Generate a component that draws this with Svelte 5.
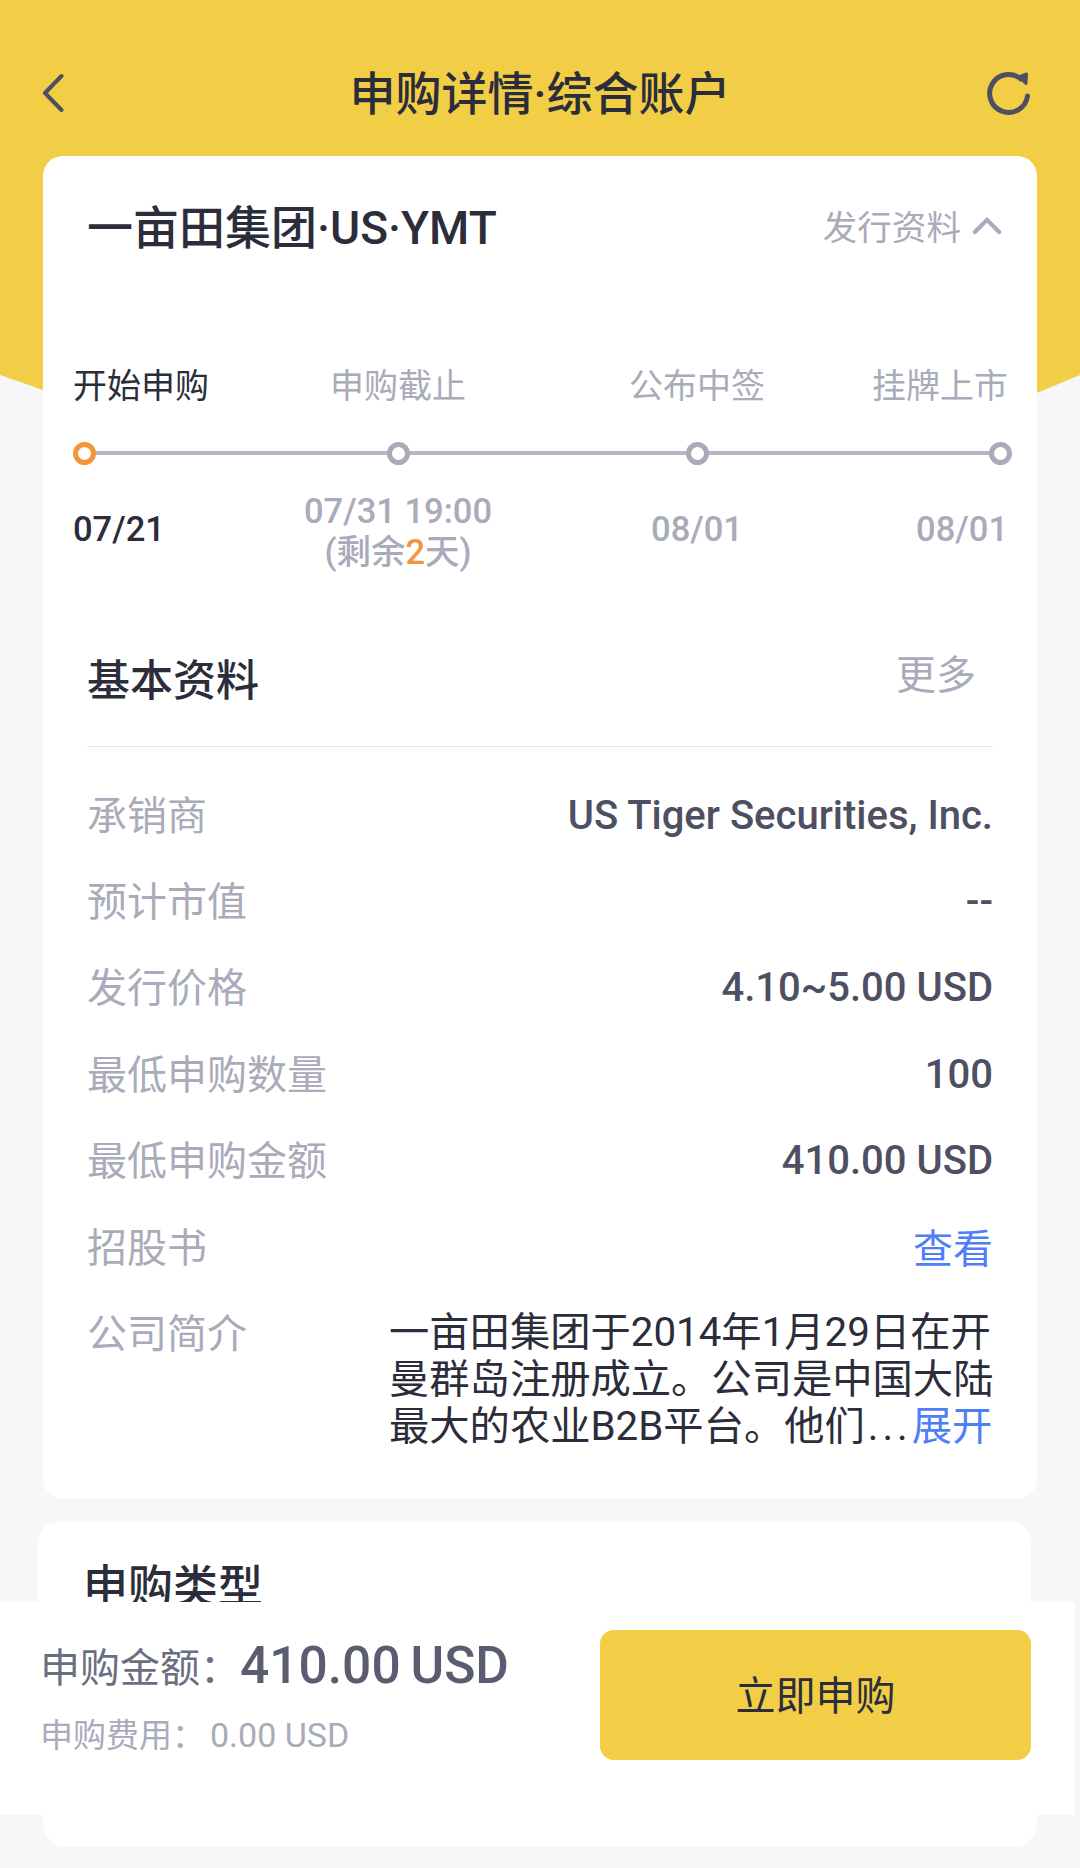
<script>
  const rows = [
    { k: '承销商', v: 'US Tiger Securities, Inc.' },
    { k: '预计市值', v: '--' },
    { k: '发行价格', v: '4.10~5.00 USD' },
    { k: '最低申购数量', v: '100' },
    { k: '最低申购金额', v: '410.00 USD' }
  ];
  const steps = [
    { label: '开始申购', x: 'first active', date: '07/21' },
    { label: '申购截止', x: 'second', date: '07/31 19:00' },
    { label: '公布中签', x: 'third', date: '08/01' },
    { label: '挂牌上市', x: 'fourth', date: '08/01' }
  ];
</script>

<div class="page">
  <div class="yellow"></div>

  <header class="nav">
    <svg class="back" viewBox="0 0 24 40" width="24" height="40"><path d="M21.500 3 L5 20 L21.500 37" fill="none" stroke="#4d5062" stroke-width="4" stroke-linecap="round" stroke-linejoin="round"/></svg>
    <h1>申购详情·综合账户</h1>
    <svg class="refresh" viewBox="0 0 48 48" width="48" height="48"><path d="M42.500 26A19 19 0 1 1 36 9" fill="none" stroke="#4d5062" stroke-width="5" stroke-linecap="round"/><path d="M41.500 4L41 13.500L34 7z" fill="#4d5062" stroke="#4d5062" stroke-width="3" stroke-linejoin="round"/></svg>
  </header>

  <section class="card main">
    <div class="head">
      <h2>一亩田集团·US·YMT</h2>
      <div class="issue">发行资料<svg viewBox="0 0 32 20" width="30" height="19"><path d="M3 17 L16 4 L29 17" fill="none" stroke="#a9abba" stroke-width="4.500" stroke-linecap="round"/></svg></div>
    </div>

    <div class="timeline">
      {#each steps as s}
        <div class="step {s.x}">
          <div class="label">{s.label}</div>
          <div class="dotrow"><span class="dot"></span></div>
          <div class="date">
            {#if s.label === '申购截止'}
              <div>{s.date}</div>
              <div>(剩余<b>2</b>天)</div>
            {:else}
              {s.date}
            {/if}
          </div>
        </div>
      {/each}
      <div class="line"></div>
    </div>

    <div class="basic">
      <h3>基本资料</h3>
      <span>更多</span>
    </div>
    <div class="rows">
      {#each rows as r}
        <div class="row"><span class="k">{r.k}</span><span class="v">{r.v}</span></div>
      {/each}
      <div class="row"><span class="k">招股书</span><span class="link">查看</span></div>
      <div class="row intro">
        <span class="k">公司简介</span>
        <p>一亩田集团于2014年1月29日在开<br>曼群岛注册成立。公司是中国大陆<br>最大的农业B2B平台。他们<span class="dots">...</span><span class="link">展开</span></p>
      </div>
    </div>
  </section>

  <section class="card second">
    <h3>申购类型</h3>
  </section>
  <section class="card third"></section>

  <footer class="bar">
    <div class="sum">
      <div class="amount"><span class="al">申购金额：</span><strong>410.00 USD</strong></div>
      <div class="fee"><span>申购费用：</span><span class="feev">0.00 USD</span></div>
    </div>
    <button>立即申购</button>
  </footer>
</div>

<style>
  :global(body) { margin: 0; background: #f6f7f9; }
  .page {
    position: relative;
    width: 1080px;
    height: 1868px;
    overflow: hidden;
    background: #f6f7f9;
    font-family: "Noto Sans CJK SC", Roboto, sans-serif;
    color: #2b2d3b;
    padding-top: 56px;
    box-sizing: border-box;
  }
  .yellow {
    position: absolute;
    left: 0; top: 0;
    width: 1080px;
    height: 420px;
    background: #f1ce45;
    clip-path: polygon(0 0, 100% 0, 100% 375px, 96% 393px, 4% 390px, 0 375px);
  }
  .nav {
    position: relative;
    height: 72px;
    display: flex;
    align-items: center;
    justify-content: space-between;
    padding: 0 47px 0 40px;
  }
  .back { margin-top: 2px; }
  .refresh { margin-top: 4px; }
  .nav h1 {
    position: absolute;
    left: 0; right: 0;
    margin: 0;
    padding-top: 4px;
    text-align: center;
    font-size: 46px;
    line-height: 72px;
    font-weight: 500;
    font-family: Roboto, "Noto Sans CJK SC", sans-serif;
  }
  .card {
    position: relative;
    background: #fff;
    border-radius: 20px;
    box-sizing: border-box;
  }
  .main {
    margin: 28px 43px 0;
    height: 1343px;
    padding: 0 44px;
  }
  .head {
    display: flex;
    justify-content: space-between;
    align-items: center;
    height: 136px;
    padding-bottom: 8px;
    margin-right: -9px;
  }
  .head h2 {
    margin: 0;
    font-size: 46px;
    font-weight: 500;
    font-family: Roboto, "Noto Sans CJK SC", sans-serif;
  }
  .issue {
    display: flex;
    align-items: center;
    gap: 11px;
    margin-top: 2px;
    font-size: 34.6px;
    color: #a9abba;
  }
  .timeline {
    position: relative;
    margin: 66px -15px 0 -14px;
    height: 240px;
    display: flex;
    font-size: 34px;
    color: #a9abba;
  }
  .step { position: absolute; top: 0; text-align: center; width: 220px; }
  .step .label { line-height: 36px; height: 40px; }
  .dotrow { height: 24px; margin-top: 35px; display: flex; justify-content: center; align-items: center; }
  .dot {
    position: relative;
    z-index: 1;
    width: 23px; height: 23px;
    box-sizing: border-box;
    border: 5px solid #a9abba;
    border-radius: 50%;
    background: #fff;
  }
  .date {
    height: 92px;
    margin-top: 18px;
    display: flex;
    flex-direction: column;
    justify-content: center;
    font-family: Roboto, "Noto Sans CJK SC", sans-serif;
    font-size: 34.5px;
    line-height: 41px;
    font-weight: 500;
  }
  .date b { color: #f2963a; font-weight: 500; }
  .first { left: 0; text-align: left; color: #2b2d3b; }
  .first .dotrow { justify-content: flex-start; }
  .first .dot { border-color: #f2963a; }
  .step.second { left: 215px; }
  .step.second .date { padding-top: 3px; }
  .step.third { left: 514px; }
  .step.fourth { right: 0; text-align: right; }
  .step.fourth .dotrow { justify-content: flex-end; }
  .step.fourth .dot { margin-right: -4px; }
  .line {
    position: absolute;
    left: 12px;
    right: 7px;
    top: 85px;
    height: 4px;
    background: #b4b6c3;
  }
  .basic {
    display: flex;
    justify-content: space-between;
    align-items: center;
    height: 92px;
    margin-top: 25px;
    border-bottom: 1px solid #e6e7eb;
    padding-bottom: 23px;
  }
  .basic h3 { margin: 0; font-size: 43px; font-weight: 500; }
  .basic span { font-size: 40px; color: #a9abba; margin-right: 17px; margin-bottom: 10px; }
  .rows { margin-top: 24px; }
  .row {
    display: flex;
    justify-content: space-between;
    align-items: center;
    height: 86.4px;
    font-size: 40px;
  }
  .k { color: #a9abba; margin-bottom: 3px; flex: none; }
  .v {
    color: #4d5062;
    font-family: Roboto, "Noto Sans CJK SC", sans-serif;
    font-weight: 500;
    font-size: 40px;
    margin-top: 2px;
  }
  .link { color: #4f7ef7; }
  .intro { align-items: flex-start; justify-content: flex-start; padding-top: 20px; }
  .intro p {
    flex: none;
    margin: 0 0 0 142px;
    line-height: 47px;
    font-size: 40.3px;
    white-space: nowrap;
    font-family: Roboto, "Noto Sans CJK SC", sans-serif;
    color: #2b2d3b;
  }
  .dots { letter-spacing: 4px; margin: 0 0 0 3px; }
  .intro .k { line-height: 47px; margin-top: -1px; }
  .card.second {
    margin: 23px 49px 0 38px;
    height: 120px;
    padding: 30px 45px;
  }
  .card.second h3 { margin: 0; font-size: 45px; font-weight: 500; line-height: 64px; }
  .card.third {
    position: absolute;
    left: 43px;
    right: 43px;
    top: 1640px;
    height: 207px;
    border-radius: 24px;
  }
  .bar {
    position: absolute;
    left: 0;
    top: 1602px;
    width: 1075px;
    height: 213px;
    background: #fff;
    box-sizing: border-box;
    padding: 28px 44px 0 40px;
    display: flex;
    justify-content: space-between;
    align-items: flex-start;
  }
  .sum { padding-top: 2px; }
  .amount { display: flex; align-items: center; height: 66px; }
  .al { font-size: 40px; color: #6b6e80; }
  .amount strong {
    font-family: Roboto, sans-serif;
    font-size: 51.5px;
    font-weight: 500;
    color: #5a5d70;
    word-spacing: -3px;
  }
  .fee { margin-top: 11px; font-size: 33px; color: #a9abba; line-height: 48px; }
  .feev { font-family: Roboto, sans-serif; font-size: 34px; margin-left: 5px; }
  button {
    width: 431px;
    height: 130px;
    border: 0;
    border-radius: 14px;
    background: #f1ce45;
    font-family: "Noto Sans CJK SC", sans-serif;
    font-size: 40px;
    color: #2b2d3b;
    padding: 0 0 4px;
  }
</style>
